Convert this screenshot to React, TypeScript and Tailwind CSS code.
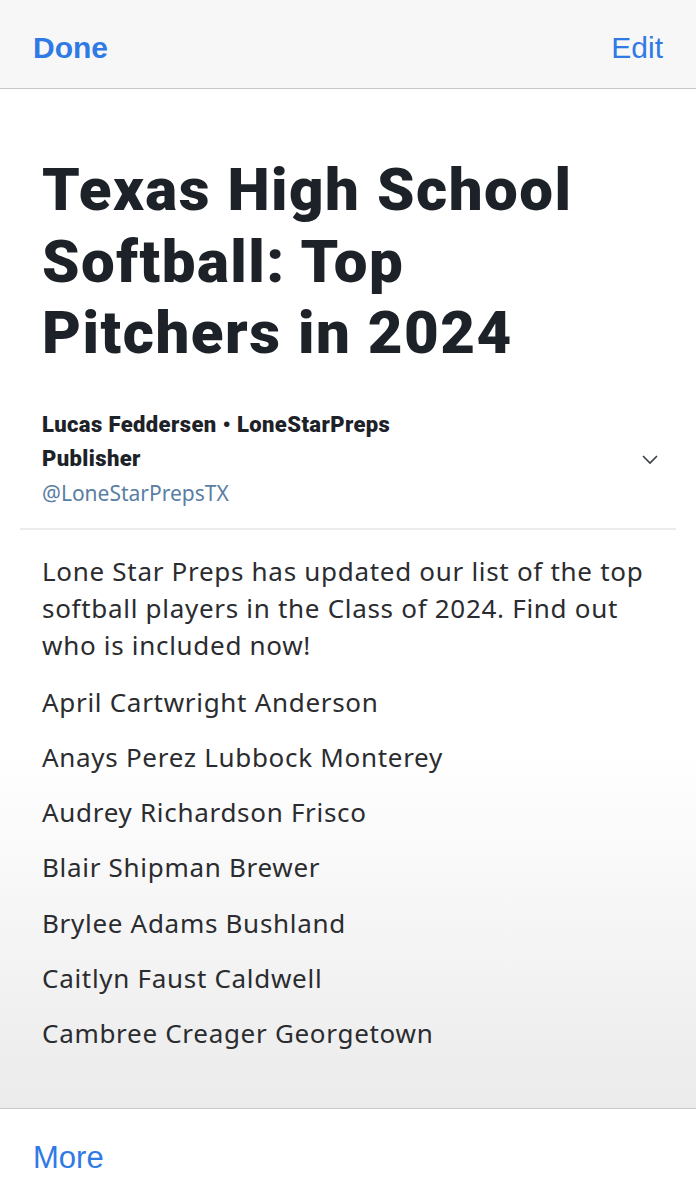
const players = [
  "April Cartwright Anderson",
  "Anays Perez Lubbock Monterey",
  "Audrey Richardson Frisco",
  "Blair Shipman Brewer",
  "Brylee Adams Bushland",
  "Caitlyn Faust Caldwell",
  "Cambree Creager Georgetown",
];

const App = () => {
  return (
    <div className="flex h-[1200px] w-[696px] flex-col overflow-hidden bg-white font-['Noto_Sans',sans-serif]">
      {/* top toolbar */}
      <header className="flex h-[89px] shrink-0 items-center justify-between border-b border-[#c8c8c8] bg-[#f7f7f7] px-[33px] pt-[6px] font-['Liberation_Sans',sans-serif] text-[30px] text-[#2f7ae5]">
        <span className="font-bold">Done</span>
        <span>Edit</span>
      </header>

      {/* article */}
      <main className="flex-1 bg-gradient-to-b from-white from-65% to-[#ebebeb] px-[42px] pt-[65px]">
        <h1 className="font-['Roboto',sans-serif] text-[60px] font-black leading-[71.5px] tracking-[1.5px] text-[#1d2228]">
          Texas High School
          <br />
          Softball: Top
          <br />
          Pitchers in 2024
        </h1>

        <div className="mt-[39px] flex items-center justify-between">
          <div className="flex flex-col font-['Roboto',sans-serif] text-[22px] leading-[34px]">
            <span className="font-black tracking-[0.4px] text-[#1d2228]">Lucas Feddersen • LoneStarPreps</span>
            <span className="font-black tracking-[0.4px] text-[#1d2228]">Publisher</span>
            <span className="font-['Noto_Sans',sans-serif] text-[21px] text-[#5a7ea3]">@LoneStarPrepsTX</span>
          </div>
          <svg width="20" height="20" viewBox="0 0 20 20" className="mr-[-6px]">
            <path d="M3 7 L10 14 L17 7" fill="none" stroke="#3a3f45" strokeWidth="1.6" />
          </svg>
        </div>

        <div className="-mx-[22px] mt-[18px] border-t-2 border-[#ececec]" />

        <p className="mt-[23px] text-[26px] leading-[37px] tracking-[0.7px] text-[#2a2c30]">
          Lone Star Preps has updated our list of the top softball players in the Class of 2024. Find out who is included now!
        </p>

        <ul className="mt-[11px] flex flex-col text-[26px] leading-[55.33px] tracking-[0.7px] text-[#2a2c30]">
          {players.map((p) => (
            <li key={p}>{p}</li>
          ))}
        </ul>
      </main>

      {/* bottom toolbar */}
      <footer className="flex h-[92px] shrink-0 items-center border-t border-[#c8c8c8] bg-white px-[33px] pt-[8px] font-['Liberation_Sans',sans-serif] text-[31px] text-[#2f7ae5]">
        More
      </footer>
    </div>
  );
};

export default App;
